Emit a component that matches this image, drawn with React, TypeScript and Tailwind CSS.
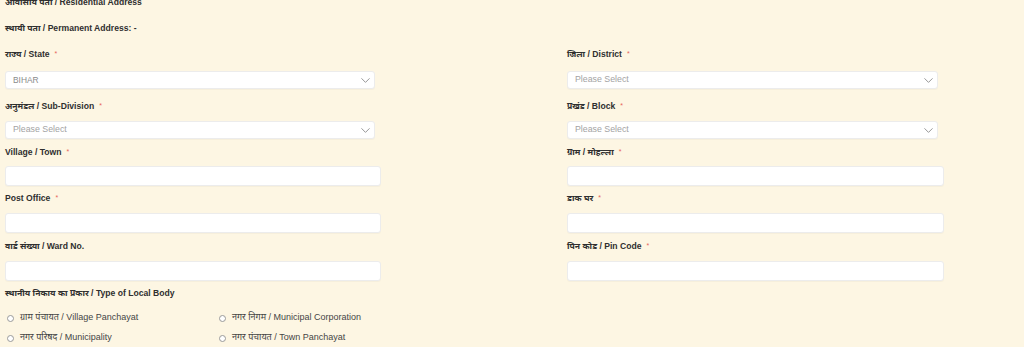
import { ChevronDown } from 'lucide-react';

type Field = {
  label: string;
  required?: boolean;
  kind: 'select' | 'input';
  value?: string;
};

type Row = {
  left: Field;
  right?: Field;
  top: string;
  gap: string;
};

const rows: Row[] = [
  {
    left: { label: 'राज्य / State', required: true, kind: 'select', value: 'BIHAR' },
    right: { label: 'जिला / District', required: true, kind: 'select' },
    top: 'mt-[14px]',
    gap: 'mb-[11px]',
  },
  {
    left: { label: 'अनुमंडल / Sub-Division', required: true, kind: 'select' },
    right: { label: 'प्रखंड / Block', required: true, kind: 'select' },
    top: 'mt-[11px]',
    gap: 'mb-[9px]',
  },
  {
    left: { label: 'Village / Town', required: true, kind: 'input' },
    right: { label: 'ग्राम / मोहल्ला', required: true, kind: 'input' },
    top: 'mt-[7px]',
    gap: 'mb-[8px]',
  },
  {
    left: { label: 'Post Office', required: true, kind: 'input' },
    right: { label: 'डाक घर', required: true, kind: 'input' },
    top: 'mt-[6px]',
    gap: 'mb-[9px]',
  },
  {
    left: { label: 'वार्ड संख्या / Ward No.', kind: 'input' },
    right: { label: 'पिन कोड / Pin Code', required: true, kind: 'input' },
    top: 'mt-[7px]',
    gap: 'mb-[9px]',
  },
];

const bodies = [
  'ग्राम पंचायत / Village Panchayat',
  'नगर निगम / Municipal Corporation',
  'नगर परिषद / Municipality',
  'नगर पंचायत / Town Panchayat',
];

function Label({ text, required }: { text: string; required?: boolean }) {
  return (
    <div className="flex h-[12px] items-center text-[8.6px] font-bold leading-[12px] text-[#2f2f2f]">
      <span>{text}</span>
      {required && <span className="ml-[5px] text-[7px] font-normal text-[#e8645a]">*</span>}
    </div>
  );
}

function FieldBox({ field, gap }: { field: Field; gap: string }) {
  return (
    <div>
      <div className={gap}>
        <Label text={field.label} required={field.required} />
      </div>
      {field.kind === 'select' ? (
        <div className="mr-[6px] flex h-[18px] items-center justify-between rounded-[3px] border border-[#ececec] bg-white pl-[7px] pr-[1px] shadow-[0_1px_1px_rgba(0,0,0,0.03)]">
          <span className={field.value ? 'text-[8.4px] text-[#8a8a8a]' : 'text-[8.8px] text-[#a3a3a3]'}>
            {field.value ?? 'Please Select'}
          </span>
          <ChevronDown className="h-[15px] w-[15px] text-[#7f7f7f]" strokeWidth={1.3} />
        </div>
      ) : (
        <div className="h-[20px] rounded-[3px] border border-[#ececec] bg-white shadow-[0_1px_1px_rgba(0,0,0,0.03)]" />
      )}
    </div>
  );
}

function Radio({ text }: { text: string }) {
  return (
    <label className="flex h-[20px] items-center gap-[6px] text-[9px] text-[#454545]">
      <span className="ml-[2px] h-[7px] w-[7px] rounded-full border border-[#9a9a9a] bg-white" />
      <span>{text}</span>
    </label>
  );
}

export default function App() {
  return (
    <div className="h-[347px] w-[1024px] overflow-hidden bg-[#fdf6e3] px-[5px] font-['Liberation_Sans','Noto_Sans',sans-serif]">
      <div className="-mt-[4px] h-[12px] text-[8.6px] font-bold leading-[12px] text-[#2f2f2f]">
        आवासीय पता / Residential Address
      </div>
      <div className="mt-[14px] h-[12px] text-[8.6px] font-bold leading-[12px] text-[#2f2f2f]">
        स्थायी पता / Permanent Address: -
      </div>

      {rows.map((row, i) => (
        <div key={i} className={`grid grid-cols-[376px_377px] gap-x-[186px] ${row.top}`}>
          <FieldBox field={row.left} gap={row.gap} />
          {row.right && <FieldBox field={row.right} gap={row.gap} />}
        </div>
      ))}

      <div className="mt-[6px]">
        <Label text="स्थानीय निकाय का प्रकार / Type of Local Body" />
      </div>
      <div className="mt-[9px] grid w-[400px] grid-cols-[212px_1fr]">
        {bodies.map((b) => (
          <Radio key={b} text={b} />
        ))}
      </div>
    </div>
  );
}
